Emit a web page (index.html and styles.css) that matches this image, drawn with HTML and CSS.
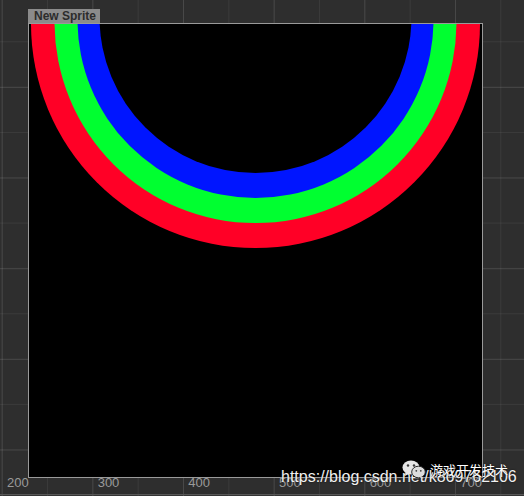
FILE: index.html
```html
<!DOCTYPE html>
<html>
<head>
<meta charset="utf-8">
<link rel="stylesheet" href="styles.css">
</head>
<body>
<div class="viewport">
  <div class="sprite">
    <div class="tab">New Sprite</div>
    <div class="frame">
      <svg class="art" width="453" height="453" viewBox="0 0 453 453">
        <rect x="0" y="0" width="453" height="453" fill="#000"/>
        <circle cx="226.5" cy="-0.5" r="224.5" fill="#ff0026"/>
        <circle cx="226.5" cy="-2" r="201" fill="#00ff30"/>
        <circle cx="226.5" cy="-4" r="178" fill="#0015ff"/>
        <circle cx="226.5" cy="-7" r="156" fill="#000"/>
      </svg>
    </div>
  </div>
  <div class="ruler">
    <span>200</span><span>300</span><span>400</span><span>500</span><span>600</span><span>700</span>
  </div>
  <div class="wm-url">https://blog.csdn.net/k869762106</div>
  <svg class="wm-icon" width="24" height="19" viewBox="0 0 24 19">
    <ellipse cx="9" cy="7.5" rx="8.5" ry="7" fill="#e6e6e6"/>
    <path d="M4 12 L3 16 L7.5 13.5 Z" fill="#e6e6e6"/>
    <circle cx="6" cy="5.5" r="1.2" fill="#3a3a3a"/>
    <circle cx="12" cy="5.5" r="1.2" fill="#3a3a3a"/>
    <ellipse cx="16.5" cy="12" rx="6.8" ry="5.8" fill="#dcdcdc" stroke="#2b2b2b" stroke-width="1"/>
    <path d="M20 16.5 L21.5 18.8 L17.5 17.5 Z" fill="#dcdcdc"/>
    <circle cx="14.3" cy="10.8" r="0.9" fill="#3a3a3a"/>
    <circle cx="18.8" cy="10.8" r="0.9" fill="#3a3a3a"/>
  </svg>
  <div class="wm-name">游戏开发技术</div>
</div>
</body>
</html>
```
FILE: styles.css
```css
html, body {
  margin: 0;
  padding: 0;
  background: #2e2e2e;
}

.viewport {
  position: relative;
  width: 524px;
  height: 496px;
  box-sizing: border-box;
  padding-top: 9px;
  overflow: hidden;
  background-color: #2e2e2e;
  background-image:
    linear-gradient(to right, rgba(255,255,255,0.07) 1px, transparent 1px),
    linear-gradient(to right, rgba(255,255,255,0.06) 1px, transparent 1px),
    linear-gradient(to bottom, rgba(255,255,255,0.07) 1px, transparent 1px),
    linear-gradient(to bottom, rgba(255,255,255,0.06) 1px, transparent 1px);
  background-size:
    90.667px 100%,
    45.333px 100%,
    100% 90.667px,
    100% 45.333px;
  background-position:
    1.7px 0,
    1.7px 0,
    0 87px,
    0 41.3px;
}

.sprite {
  margin-left: 28px;
  width: 455px;
}

.tab {
  width: 72px;
  height: 14px;
  box-sizing: border-box;
  padding-left: 6px;
  background: #8b8b8b;
  color: #2c2c2c;
  font-family: "Liberation Sans", Arial, sans-serif;
  font-weight: bold;
  font-size: 12px;
  line-height: 14px;
  white-space: nowrap;
}

.frame {
  width: 453px;
  height: 453px;
  border: 1px solid #9a9a9a;
  background: #000;
}

.art {
  display: block;
}

.ruler {
  display: flex;
  height: 16px;
  padding-left: 7px;
  border-bottom: 1px solid #575757;
  font-family: "Liberation Sans", Arial, sans-serif;
  font-size: 13px;
  line-height: 10px;
  color: #9a9a9a;
}

.ruler span {
  flex: 0 0 90.667px;
}

.wm-url {
  position: absolute;
  left: 281px;
  top: 468px;
  font-family: "Liberation Sans", Arial, sans-serif;
  font-size: 16px;
  line-height: 18px;
  color: #f0f0f0;
  white-space: nowrap;
  text-shadow: 0 0 2px rgba(0,0,0,0.7);
}

.wm-icon {
  position: absolute;
  left: 402px;
  top: 460px;
}

.wm-name {
  position: absolute;
  left: 430px;
  top: 463px;
  font-family: "Noto Sans CJK SC", sans-serif;
  font-size: 13px;
  line-height: 13px;
  color: #ffffff;
  white-space: nowrap;
  text-shadow: 0 0 2px rgba(0,0,0,0.6);
}
```
